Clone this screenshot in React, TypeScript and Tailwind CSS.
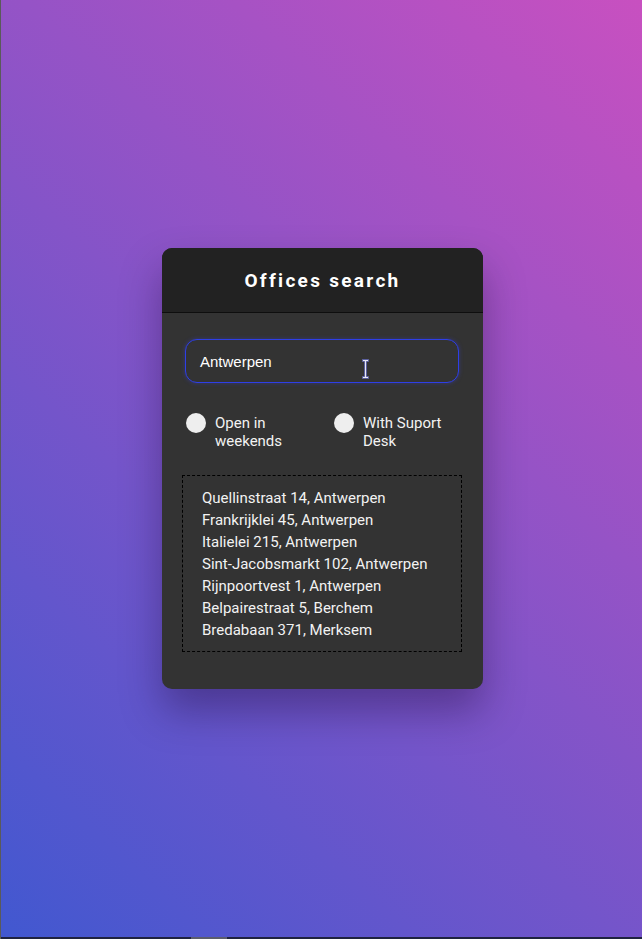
import React from "react";

const results = [
  "Quellinstraat 14, Antwerpen",
  "Frankrijklei 45, Antwerpen",
  "Italielei 215, Antwerpen",
  "Sint-Jacobsmarkt 102, Antwerpen",
  "Rijnpoortvest 1, Antwerpen",
  "Belpairestraat 5, Berchem",
  "Bredabaan 371, Merksem",
];

function Toggle({ label }: { label: React.ReactNode }) {
  return (
    <div className="flex items-start gap-[9px]">
      <div className="w-5 h-5 rounded-full bg-[#eeeeee] shrink-0" />
      <div className="text-[15px] leading-[18px] text-[#f2f2f2] mt-px">{label}</div>
    </div>
  );
}

export default function App() {
  return (
    <div
      className="relative w-full h-[939px] flex items-center justify-center overflow-hidden border-l border-[#5a5a5a]"
      style={{
        backgroundImage: "linear-gradient(43deg, #4158D0 0%, #C850C0 100%)",
        fontFamily: "Roboto, 'Liberation Sans', sans-serif",
      }}
    >
      <div className="w-[321px] ml-[2px] rounded-[10px] bg-[#333333] overflow-hidden shadow-[0_22px_40px_rgba(20,0,40,0.35)] mt-[-2px]">
        <div className="h-[65px] bg-[#222222] border-b border-[#0e0e0e] flex items-center justify-center">
          <h1 className="text-[19px] font-bold tracking-[2.3px] text-white pt-[2px]">Offices search</h1>
        </div>
        <div className="pt-[26px] pb-[37px] pl-5">
          <div className="relative ml-[3px] w-[274px] h-[44px] rounded-[12px] border border-[#2e3fe6] bg-[#333333] flex items-center pl-[14px] pt-[3px] shadow-[0_0_4px_rgba(60,70,255,0.35)]">
            <span
              className="text-[15px] text-white"
              style={{ fontFamily: "'Liberation Sans', Arial, sans-serif" }}
            >
              Antwerpen
            </span>
            <svg
              className="absolute left-[176px] top-[19px]"
              width="7"
              height="20"
              viewBox="0 0 7 20"
            >
              <path
                d="M0.5 0.5 H6.5 V2.5 H4.5 V17.5 H6.5 V19.5 H0.5 V17.5 H2.5 V2.5 H0.5 Z"
                fill="#e8e8f4"
                stroke="#5a5f9e"
                strokeWidth="1"
              />
            </svg>
          </div>
          <div className="mt-[30px] ml-[4px] grid grid-cols-[148px_1fr]">
            <Toggle label={<>Open in<br />weekends</>} />
            <Toggle label={<>With Suport<br />Desk</>} />
          </div>
          <div className="mt-[25px] w-[280px] border border-dashed border-black px-[19px] pt-[11px] pb-[10px]">
            {results.map((r) => (
              <div key={r} className="text-[15px] leading-[22px] text-[#f2f2f2]">
                {r}
              </div>
            ))}
          </div>
        </div>
      </div>
      <div className="absolute left-0 right-0 bottom-0 h-[2px] bg-[#1f2340]" />
      <div className="absolute left-[190px] w-[36px] bottom-0 h-[2px] bg-[#5b5d6e]" />
    </div>
  );
}
